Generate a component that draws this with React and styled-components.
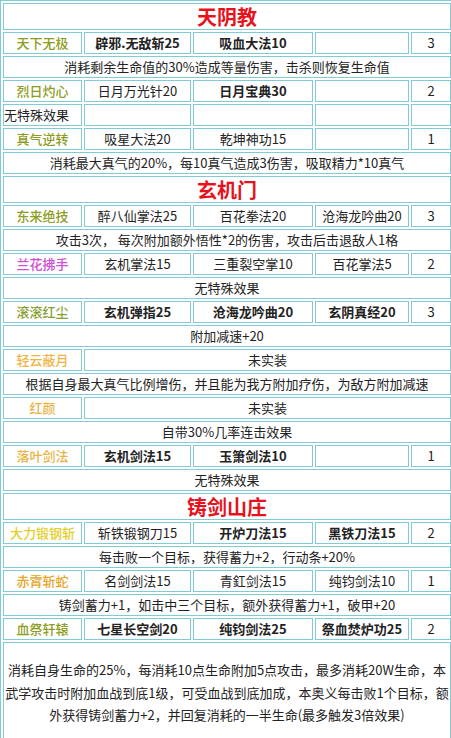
import React from "react";
import styled, { createGlobalStyle } from "styled-components";

const Global = createGlobalStyle`
  html, body { margin: 0; padding: 0; background: #fff; }
  body { font-family: "Noto Sans CJK SC", "Noto Sans", sans-serif; color: #222; }
`;

const Table = styled.table`
  width: 450px;
  table-layout: fixed;
  border-collapse: separate;
  border-spacing: 2px;
  border: 1px solid #80cbd4;
  background: #fff;
  font-size: 13px;
`;

const Cell = styled.td`
  border: 1px solid #80cbd4;
  padding: 0;
  height: 20px;
  line-height: 20px;
  text-align: ${(p) => p.$align || "center"};
  vertical-align: middle;
  white-space: nowrap;
  overflow: hidden;
  font-weight: ${(p) => (p.$bold ? 700 : p.$name ? 500 : 400)};
  color: ${(p) => p.$color || "#222"};
`;

const TitleCell = styled.td`
  border: 1px solid #80cbd4;
  padding: 0;
  height: 25px;
  line-height: 25px;
  text-align: center;
  font-size: 20px;
  font-weight: 700;
  color: #e8121c;
`;

const DescCell = styled.td`
  border: 1px solid #80cbd4;
  padding: 0;
  height: 20px;
  line-height: 20px;
  text-align: center;
  white-space: nowrap;
`;

const BigDescCell = styled.td`
  border: 1px solid #80cbd4;
  padding: 0;
  height: 100px;
  line-height: 22.5px;
  text-align: center;
  vertical-align: middle;
  white-space: nowrap;
  overflow: hidden;
`;

const OLIVE = "#8c9c1c";

const data = [
  {
    title: "天阴教",
    rows: [
      { name: "天下无极", color: OLIVE, skills: [["辟邪.无敌斩25", 1], ["吸血大法10", 1], ["", 0]], n: 3, desc: "消耗剩余生命值的30%造成等量伤害，击杀则恢复生命值" },
      { name: "烈日灼心", color: OLIVE, skills: [["日月万光针20", 0], ["日月宝典30", 1], ["", 0]], n: 2, split: "无特殊效果" },
      { name: "真气逆转", color: OLIVE, skills: [["吸星大法20", 0], ["乾坤神功15", 0], ["", 0]], n: 1, desc: "消耗最大真气的20%，每10真气造成3伤害，吸取精力*10真气" },
    ],
  },
  {
    title: "玄机门",
    rows: [
      { name: "东来绝技", color: OLIVE, skills: [["醉八仙掌法25", 0], ["百花拳法20", 0], ["沧海龙吟曲20", 0]], n: 3, desc: "攻击3次， 每次附加额外悟性*2的伤害，攻击后击退敌人1格" },
      { name: "兰花拂手", color: "#cf4fd2", skills: [["玄机掌法15", 0], ["三重裂空掌10", 0], ["百花掌法5", 0]], n: 2, desc: "无特殊效果" },
      { name: "滚滚红尘", color: "#86a030", skills: [["玄机弹指25", 1], ["沧海龙吟曲20", 1], ["玄阴真经20", 1]], n: 3, desc: "附加减速+20" },
      { name: "轻云蔽月", color: "#f0b445", wide: "未实装", desc: "根据自身最大真气比例增伤，并且能为我方附加疗伤，为敌方附加减速" },
      { name: "红颜", color: "#e8b445", wide: "未实装", desc: "自带30%几率连击效果" },
      { name: "落叶剑法", color: "#e8b445", skills: [["玄机剑法15", 1], ["玉箫剑法10", 1], ["", 0]], n: 1, desc: "无特殊效果" },
    ],
  },
  {
    title: "铸剑山庄",
    rows: [
      { name: "大力锻钢斩", color: "#e2cf2a", skills: [["斩铁锻钢刀15", 0], ["开炉刀法15", 1], ["黑铁刀法15", 1]], n: 2, desc: "每击败一个目标，获得蓄力+2，行动条+20%" },
      { name: "赤霄斩蛇", color: "#e8a425", skills: [["名剑剑法15", 0], ["青釭剑法15", 0], ["纯钧剑法10", 0]], n: 1, desc: "铸剑蓄力+1，如击中三个目标，额外获得蓄力+1，破甲+20" },
      { name: "血祭轩辕", color: OLIVE, skills: [["七星长空剑20", 1], ["纯钧剑法25", 1], ["祭血焚炉功25", 1]], n: 2, big: true },
    ],
  },
];

function SkillRow({ row }) {
  if (row.wide) {
    return (
      <tr>
        <Cell $name $color={row.color}>{row.name}</Cell>
        <Cell colSpan={4}>{row.wide}</Cell>
      </tr>
    );
  }
  return (
    <tr>
      <Cell $name $color={row.color}>{row.name}</Cell>
      {row.skills.map(([s, b], i) => (
        <Cell key={i} $bold={!!b}>{s}</Cell>
      ))}
      <Cell>{row.n}</Cell>
    </tr>
  );
}

function DescRow({ row }) {
  if (row.split) {
    return (
      <tr>
        <Cell $align="left">{row.split}</Cell>
        <Cell />
        <Cell />
        <Cell />
        <Cell />
      </tr>
    );
  }
  if (row.big) {
    return (
      <tr>
        <BigDescCell colSpan={5}>
          消耗自身生命的25%，每消耗10点生命附加5点攻击，最多消耗20W生命，本
          <br />
          武学攻击时附加血战到底1级，可受血战到底加成，本奥义每击败1个目标，额
          <br />
          外获得铸剑蓄力+2，并回复消耗的一半生命(最多触发3倍效果)
        </BigDescCell>
      </tr>
    );
  }
  return (
    <tr>
      <DescCell colSpan={5}>{row.desc}</DescCell>
    </tr>
  );
}

export default function App() {
  return (
    <>
      <Global />
      <Table>
        <colgroup>
          <col style={{ width: 79 }} />
          <col style={{ width: 107 }} />
          <col style={{ width: 120 }} />
          <col style={{ width: 94 }} />
          <col style={{ width: 40 }} />
        </colgroup>
        <tbody>
          {data.map((sec) => (
            <React.Fragment key={sec.title}>
              <tr>
                <TitleCell colSpan={5}>{sec.title}</TitleCell>
              </tr>
              {sec.rows.map((row) => (
                <React.Fragment key={row.name}>
                  <SkillRow row={row} />
                  <DescRow row={row} />
                </React.Fragment>
              ))}
            </React.Fragment>
          ))}
        </tbody>
      </Table>
    </>
  );
}
